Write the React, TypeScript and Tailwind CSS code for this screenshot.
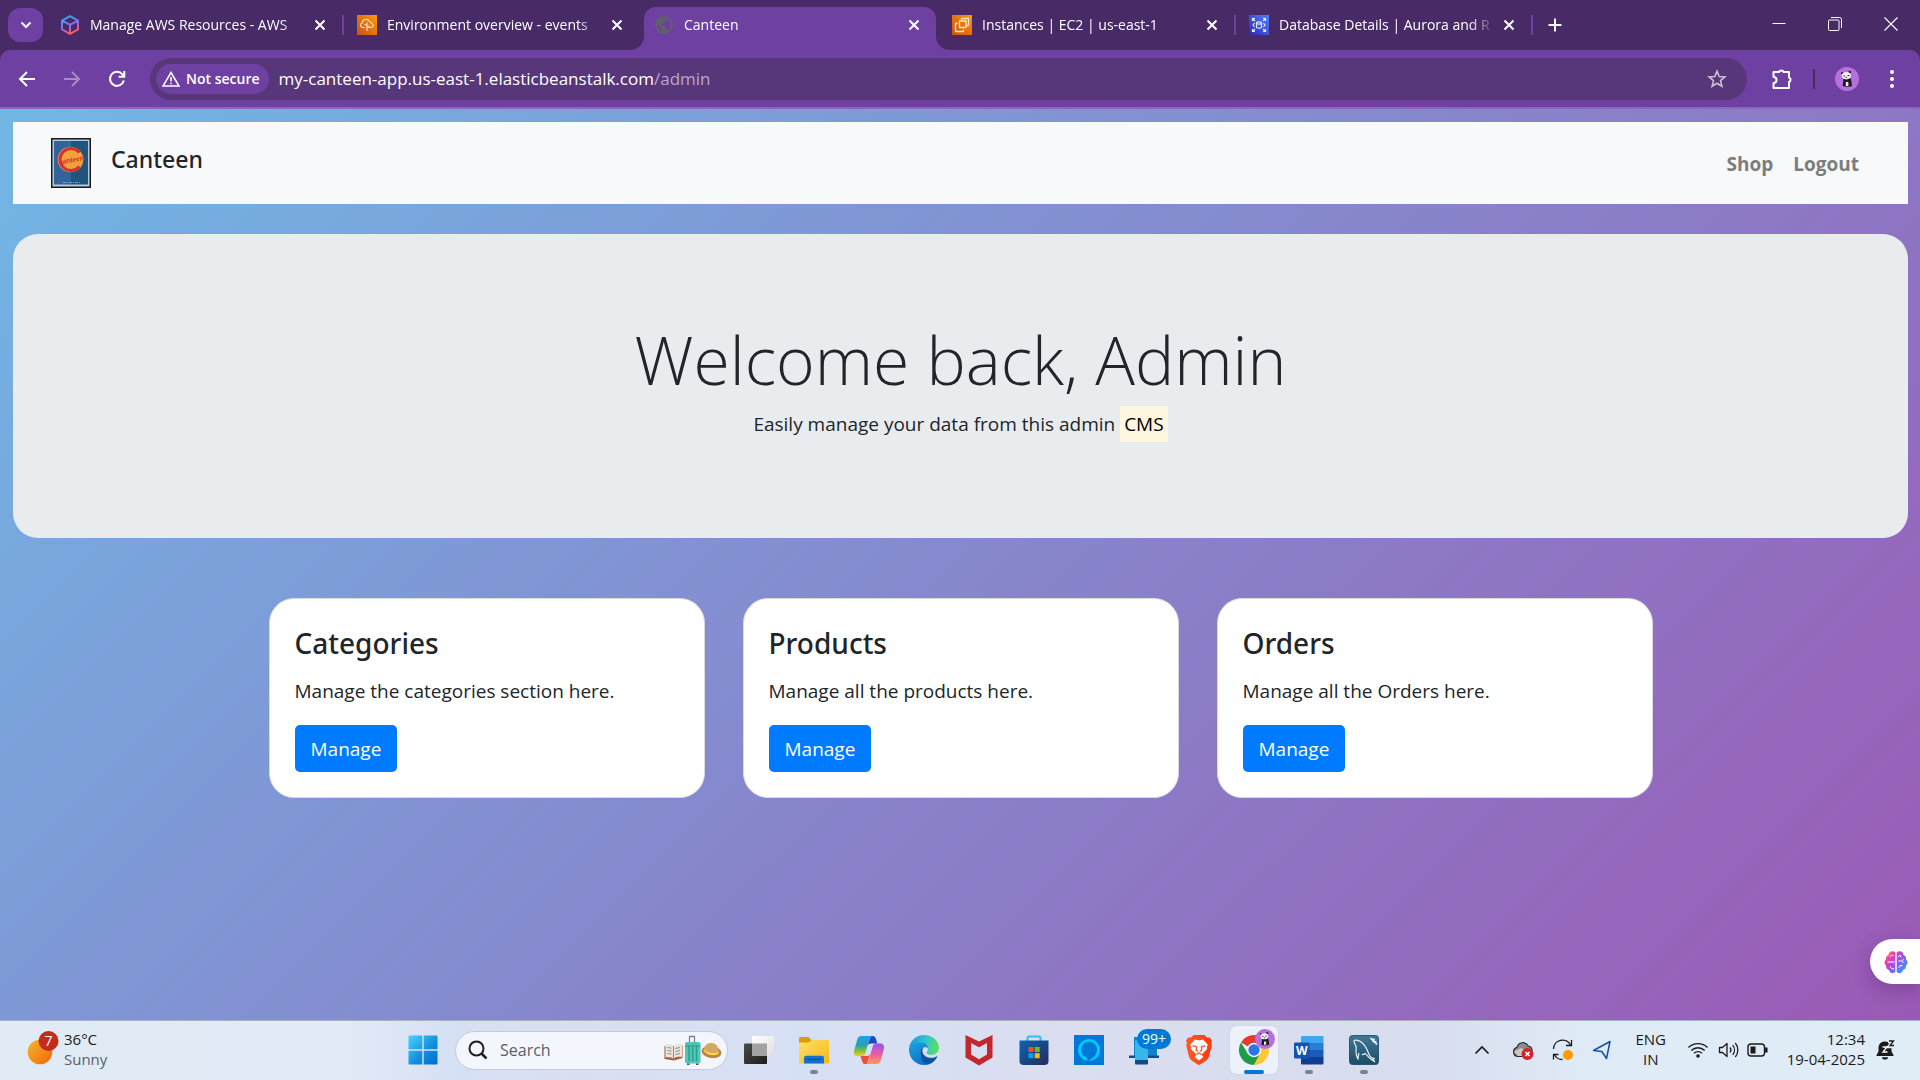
import React from "react";

const UI = "font-['Open_Sans','Noto_Sans',sans-serif]";

type IconProps = { className?: string };

/* ---------- Browser icons ---------- */

function AwsCube() {
  return (
    <svg viewBox="0 0 20 20" className="size-5" fill="none" strokeWidth="2" strokeLinejoin="round" strokeLinecap="round">
      <defs>
        <linearGradient id="cube" x1="6" y1="0" x2="14" y2="20" gradientUnits="userSpaceOnUse">
          <stop offset="0" stopColor="#19b5e6" />
          <stop offset=".5" stopColor="#8a6cf0" />
          <stop offset=".8" stopColor="#f0568c" />
          <stop offset="1" stopColor="#ff6a3d" />
        </linearGradient>
      </defs>
      <path d="M10 1.2 18 5.6v8.8l-8 4.4-8-4.4V5.6zM2 5.6l8 4.2 8-4.2M10 9.8v9" stroke="url(#cube)" />
    </svg>
  );
}

function BeanstalkIcon() {
  return (
    <svg viewBox="0 0 20 20" className="size-5" fill="none">
      <defs>
        <linearGradient id="orange" x1="0" y1="20" x2="20" y2="0" gradientUnits="userSpaceOnUse">
          <stop offset="0" stopColor="#c8511b" />
          <stop offset="1" stopColor="#ff9900" />
        </linearGradient>
      </defs>
      <rect width="20" height="20" fill="url(#orange)" />
      <path d="M7.500 12.500H5.500a2.300 2.300 0 0 1-.3-4.500 3.800 3.800 0 0 1 7.200-1.500 2 2 0 0 1 2 1.700 2.200 2.200 0 0 1 0 4.300h-2M10 15.500V8M10 11l-2-1.500M10 13l2.200-1.800" stroke="#fbe3c8" strokeWidth="1.100" strokeLinecap="round" />
    </svg>
  );
}

function GlobeIcon() {
  return (
    <svg viewBox="0 0 20 20" className="size-5">
      <circle cx="10" cy="10" r="8" fill="none" stroke="#5f6368" strokeWidth="1.700" />
      <path d="M9.500 2.500c-4 0-7 3-7.300 7.100 1.500.9 2.600.9 3.800 1.900 1 .9.300 2.200 1.600 2.900.9.500.6 1.900 1 3.100 2.100.4 4-.2 5.600-1.600-.4-1.300-1-1.600-2.200-1.700-1-1.100.2-2.600-1.300-3.300-1.100-.5-2.600.2-3.300-1 0-1.100 1.300-1.300 2.100-1.700.7-.5.3-1.400 1.200-2 .8-.6 1.300-.6 1.800-1.400-.3-1.100-1.200-1.900-3-2.300z" fill="#5f6368" />
    </svg>
  );
}

function Ec2Icon() {
  return (
    <svg viewBox="0 0 20 20" className="size-5" fill="none">
      <rect width="20" height="20" fill="url(#orange)" />
      <g stroke="#fde7cd" strokeWidth="1.300" strokeLinejoin="round">
        <path d="M7.500 6h6.500v6.500H7.500zM9.500 3.500H16.500V10.500M5.500 8.500H3.500v8h8v-2" />
        <path d="M9.500 5V3.500M14.500 10.500h2" />
      </g>
    </svg>
  );
}

function RdsIcon() {
  return (
    <svg viewBox="0 0 20 20" className="size-5" fill="none">
      <defs>
        <linearGradient id="rds" x1="0" y1="20" x2="20" y2="0" gradientUnits="userSpaceOnUse">
          <stop offset="0" stopColor="#2e27ad" />
          <stop offset="1" stopColor="#527fff" />
        </linearGradient>
      </defs>
      <rect width="20" height="20" fill="url(#rds)" />
      <g stroke="#e4eaff" strokeWidth="1.200">
        <path d="M3.500 6V3.500H6M3.500 3.500 6 6M14 3.500h2.500V6M16.500 3.500 14 6M3.500 14v2.500H6M3.500 16.500 6 14M14 16.500h2.500V14M16.500 16.500 14 14M5.500 8l-1.500 2 1.500 2M14.500 8l1.500 2-1.500 2" />
        <ellipse cx="10" cy="8" rx="2.500" ry="1.100" />
        <path d="M7.500 8v4c0 1.500 5 1.500 5 0V8" />
      </g>
    </svg>
  );
}

function CloseX({ className }: IconProps) {
  return (
    <svg viewBox="0 0 12 12" className={className} fill="none" stroke="#fff" strokeWidth="2">
      <path d="m1.500 1.500 9 9M10.500 1.500l-9 9" />
    </svg>
  );
}

function Panda({ className }: IconProps) {
  return (
    <svg viewBox="0 0 24 24" className={className}>
      <circle cx="12" cy="12" r="12" fill="#b66fe0" />
      <circle cx="7.300" cy="6.300" r="1.300" fill="#222" />
      <circle cx="14.800" cy="5" r="1.300" fill="#222" />
      <path d="M8.500 11.500h7.500l1 7.500c-1.500 1-7 1-9.300 0z" fill="#1b1b1f" />
      <ellipse cx="11.300" cy="8.700" rx="4.700" ry="3.700" fill="#f1f1f1" />
      <path d="M8.500 9h1.800M12.500 8.500h1.800M10.800 10.500h1.200" stroke="#222" strokeWidth="1" />
      <path d="M10.800 15.500c.6-1 2-1 2.600 0V19h-2.600z" fill="#ececec" />
    </svg>
  );
}

/* ---------- Taskbar icons ---------- */

function WindowsLogo() {
  return (
    <svg viewBox="0 0 30 30" className="size-[30px]">
      <defs>
        <linearGradient id="win" x1="0" y1="0" x2="30" y2="30" gradientUnits="userSpaceOnUse">
          <stop offset="0" stopColor="#4fd3ff" />
          <stop offset=".55" stopColor="#1490df" />
          <stop offset="1" stopColor="#0069cf" />
        </linearGradient>
      </defs>
      <path fill="url(#win)" d="M1.500.5H14.300V14.300H.5V1.500a1 1 0 0 1 1-1zM15.700.5H28.500a1 1 0 0 1 1 1V14.300H15.700zM.5 15.700H14.300V29.500H1.500a1 1 0 0 1-1-1zM15.700 15.700H29.500V28.500a1 1 0 0 1-1 1H15.700z" />
    </svg>
  );
}

function TaskViewIcon() {
  return (
    <svg viewBox="0 0 32 32" className="size-8">
      <defs>
        <linearGradient id="tv" x1="0" y1="0" x2="1" y2="1">
          <stop offset="0" stopColor="#4a4a4a" />
          <stop offset="1" stopColor="#1c1c1c" />
        </linearGradient>
        <linearGradient id="tv2" x1="0" y1="0" x2="1" y2="1">
          <stop offset="0" stopColor="#fff" />
          <stop offset="1" stopColor="#dfdfdf" />
        </linearGradient>
      </defs>
      <rect x="1" y="9.500" width="23" height="20.500" rx="1" fill="url(#tv)" />
      <rect x="9" y="2" width="22" height="20" rx="1" fill="url(#tv2)" />
      <path d="M9 9.500h15V22H9z" fill="#a3a3a3" />
    </svg>
  );
}

function ExplorerIcon() {
  return (
    <svg viewBox="0 0 32 32" className="size-8">
      <defs>
        <linearGradient id="fold" x1="0" y1="0" x2="1" y2="1">
          <stop offset="0" stopColor="#ffdf6b" />
          <stop offset="1" stopColor="#f9b716" />
        </linearGradient>
      </defs>
      <path d="M1 4a1 1 0 0 1 1-1h8.500l3 3v4H1z" fill="#dd9b07" />
      <path d="M1 8.500h9.500L13.500 6H30a1 1 0 0 1 1 1v21.500a1 1 0 0 1-1 1H2a1 1 0 0 1-1-1z" fill="url(#fold)" />
      <path d="M6 29.500V24a2.200 2.200 0 0 1 2.200-2.200h15.600A2.200 2.200 0 0 1 26 24v5.500z" fill="#0f72cc" />
      <path d="M9.500 25.500h13" stroke="#0a4b96" strokeWidth="1.300" />
    </svg>
  );
}

function CopilotIcon() {
  return (
    <svg viewBox="0 0 32 32" className="size-8">
      <defs>
        <linearGradient id="cpA" x1="0" y1="0" x2="0" y2="1">
          <stop offset="0" stopColor="#1aa3f0" />
          <stop offset=".45" stopColor="#2b9fb4" />
          <stop offset=".7" stopColor="#6fbf45" />
          <stop offset="1" stopColor="#f3ca1b" />
        </linearGradient>
        <linearGradient id="cpB" x1="0" y1="0" x2="0" y2="1">
          <stop offset="0" stopColor="#9357e8" />
          <stop offset=".5" stopColor="#e65ba8" />
          <stop offset="1" stopColor="#ff9a52" />
        </linearGradient>
      </defs>
      <path d="M18 2h1.500c2 0 2.700 1 3.200 2.600L24.300 9.500h-6c-2.500 0-3.300 1-4 3L17 4z" fill="#1949c4" />
      <path d="M14 30h-1.500c-2 0-2.800-1-3.300-2.600L7.500 22h6.300c2.500 0 3-1 3.800-3.500z" fill="#ef4f3a" />
      <path d="M8.500 2h11c-1.800.5-2.500 1.600-3.100 3.500l-4 13.500c-.7 2.200-1.500 3-3.500 3H4.500C1.600 22 .3 20 1.100 16.900L4 6.300C4.900 3.200 6 2 8.500 2z" fill="url(#cpA)" />
      <path d="M23.500 30h-11c1.800-.5 2.500-1.600 3.100-3.500l4-13.500c.7-2.200 1.500-3.500 3.500-3.500h4.400c2.900 0 4.200 2.500 3.400 5.600L28 25.700c-.9 3.100-2 4.300-4.500 4.300z" fill="url(#cpB)" />
    </svg>
  );
}

function EdgeIcon() {
  return (
    <svg viewBox="0 0 32 32" className="size-8">
      <defs>
        <linearGradient id="edA" x1="2" y1="10" x2="31" y2="14" gradientUnits="userSpaceOnUse">
          <stop offset="0" stopColor="#1d9ad8" />
          <stop offset=".5" stopColor="#2fc3d0" />
          <stop offset="1" stopColor="#62e256" />
        </linearGradient>
        <linearGradient id="edB" x1="4" y1="10" x2="16" y2="31" gradientUnits="userSpaceOnUse">
          <stop offset="0" stopColor="#1b9de2" />
          <stop offset="1" stopColor="#0b6fc9" />
        </linearGradient>
      </defs>
      <path d="M1 14.500C1.800 7 8 1 16 1c8.500 0 15 6 15 12.500 0 4.500-3.500 7.500-7.500 7.500-3.300 0-5-1.200-5-2.300 0-.8 1.300-1.200 1.300-3.200 0-3-3-5.500-7.300-5.500C7 10 2.500 12 1 14.500z" fill="url(#edA)" />
      <path d="M1 14.500C3 11 7.500 8.500 12.500 8.500c4 0 7 2 7.300 5.500-4-2-8 1-7.600 6 .3 5.500 4.500 10 8.800 10.200-1.500.6-3.200.8-5 .8C7.500 31 1 24 1 16z" fill="url(#edB)" />
      <path d="M12.200 20c-.3-3 .9-5.700 3.300-6.700-.8 1-1.100 2.200-1.100 3.400 0 4.300 4 7 8.600 7 2.500 0 4.300-.7 5.500-1.300.6-.3 1 .1.700.7-1.700 3.600-5 6.600-9.200 7.400-4.500-.5-7.500-5-7.800-10.500z" fill="#0c559f" />
    </svg>
  );
}

function McAfeeIcon() {
  return (
    <svg viewBox="0 0 32 32" className="size-8">
      <path d="M2.500 1 16 7.500 29.500 1v22.500L16 31.500 2.500 23.500zM8 9v11.500l8 4.700 8-4.700V9l-8 4.200z" fill="#c1272d" fillRule="evenodd" />
    </svg>
  );
}

function StoreIcon() {
  return (
    <svg viewBox="0 0 32 32" className="size-8">
      <defs>
        <linearGradient id="st" x1="0" y1="0" x2="1" y2="1">
          <stop offset="0" stopColor="#0a63b5" />
          <stop offset="1" stopColor="#252d5c" />
        </linearGradient>
      </defs>
      <path d="M9.500 8V4a1.500 1.500 0 0 1 1.500-1.500h10A1.500 1.500 0 0 1 22.500 4v4" fill="none" stroke="#2cc0f5" strokeWidth="2" />
      <path d="M1.500 6.500h29V27a4 4 0 0 1-4 4h-21a4 4 0 0 1-4-4z" fill="url(#st)" />
      <path d="M10.500 13h5v5h-5z" fill="#f25022" />
      <path d="M16.700 13h5v5h-5z" fill="#7fba00" />
      <path d="M10.500 19.200h5v5h-5z" fill="#00a4ef" />
      <path d="M16.700 19.200h5v5h-5z" fill="#ffb900" />
    </svg>
  );
}

function AlexaIcon() {
  return (
    <svg viewBox="0 0 32 32" className="size-8">
      <path d="M1 1h30v30H1z" fill="#0078d7" />
      <path d="M16 5a11 11 0 0 0-3 21.600c1.500.4 1.300.5 1.300-1.100 0-1.200 0-1.700-1-2.200A8 8 0 1 1 24 15.500c0 6-5 9.500-9 11.500C22 27 27 22.500 27 16A11 11 0 0 0 16 5z" fill="#00caff" />
    </svg>
  );
}

function PhoneLinkIcon() {
  return (
    <svg viewBox="0 0 32 32" className="size-8">
      <path d="M6 3h23v19H6z" fill="#1483cf" />
      <path d="M1 21.500h30V24H1z" fill="#0c4f8c" />
      <path d="M7 6.500h13v21H7z" fill="#38b6ea" />
      <path d="M7 26h13v3.500a1 1 0 0 1-1 1H8a1 1 0 0 1-1-1z" fill="#0e4c86" />
    </svg>
  );
}

function BraveIcon() {
  return (
    <svg viewBox="0 0 32 32" className="size-8">
      <defs>
        <linearGradient id="br" x1="0" x2="1">
          <stop offset="0" stopColor="#ff5a24" />
          <stop offset="1" stopColor="#fb3a10" />
        </linearGradient>
      </defs>
      <path d="m10.500 1 11 0 2.500 2.600 2.800-.2 2.200 3.400-.9 2.700.7 2L26 22.500c-.6 2-1.500 3-3 4.200L16 31.200l-7-4.500c-1.500-1.200-2.400-2.200-3-4.200L3.200 11.500l.7-2L3 6.800l2.200-3.400 2.800.2z" fill="url(#br)" />
      <path d="M12 5.500c1.300.5 2.600.8 4 .8s2.700-.3 4-.8l4.800 5.200-1 2.500.4 1.600-5.200 5.400.2 1.600 1.200 1.200-4.400 3.600-4.400-3.600 1.200-1.200.2-1.600-5.200-5.400.4-1.600-1-2.500z" fill="#fff" />
      <path d="M9.500 11.800l4 .8M22.500 11.800l-4 .8M13.800 12.500l-.6 3.500 1.800 1.500M18.200 12.500l.6 3.500-1.800 1.500M13.300 20.500 16 19l2.700 1.500" stroke="#fb4a1c" strokeWidth="1.200" fill="none" />
    </svg>
  );
}

function ChromeIcon() {
  return (
    <svg viewBox="0 0 32 32" className="size-8">
      <path d="M16 16 3 8.500A15 15 0 0 1 29 8.500z" fill="#e33b2e" />
      <path d="M16 16 29 8.500A15 15 0 0 1 16 31l6-11z" fill="#fcc934" />
      <path d="M16 16l6 3.500L16 31A15 15 0 0 1 3 8.500L9.800 19.500z" fill="#1e9c4a" />
      <path d="M16 9h13.300l-.3-.5H16z" fill="#e33b2e" />
      <circle cx="16" cy="16" r="7.200" fill="#fff" />
      <circle cx="16" cy="16" r="5.700" fill="#2f74ea" />
    </svg>
  );
}

function WordIcon() {
  return (
    <svg viewBox="0 0 32 32" className="size-8">
      <path d="M8 3a1 1 0 0 1 1-1h20.500a1 1 0 0 1 1 1v6H8z" fill="#41a5ee" />
      <path d="M8 9h22.500v7H8z" fill="#2b7cd3" />
      <path d="M8 16h22.500v7H8z" fill="#185abd" />
      <path d="M8 23h22.500v6.500a1 1 0 0 1-1 1H9a1 1 0 0 1-1-1z" fill="#103f91" />
      <rect x="1" y="8.500" width="15.500" height="16" rx="1.300" fill="#1453b3" />
      <text x="8.800" y="20.700" textAnchor="middle" fontSize="12" fontWeight="700" fill="#fff" fontFamily="Open Sans, sans-serif">W</text>
    </svg>
  );
}

function WorkbenchIcon() {
  return (
    <svg viewBox="0 0 32 32" className="size-8">
      <defs>
        <linearGradient id="wb" x1="0" y1="0" x2="0" y2="1">
          <stop offset="0" stopColor="#3f7896" />
          <stop offset="1" stopColor="#1c4c66" />
        </linearGradient>
      </defs>
      <rect x="1.500" y="1.500" width="29" height="29" rx="3" fill="url(#wb)" stroke="#2b5870" />
      <path d="M6 6.500c5-1.500 10 3 12.500 8 1.500 3.500 2.500 6.500 4 8.500l3.500 1.500-1 .5 2 3c-2.500-2.500-5-3-6.500-5-1.500-1.500-2-3-3.500-3.500-1 1-2.500 1.500-3 .5M6 6.500c-.5 2 1.500 4 2 6s-.5 5 .5 8.500c.5 2 1 3.500 1.500 4 .3-2 .5-4.500 1-6" fill="none" stroke="#e8f1f5" strokeWidth="1.200" />
      <path d="M22.500 4 25 6.500M25 6.500l4 4M26 4.500l-.5 3 3 .5" stroke="#fff" strokeWidth="1.600" fill="none" />
    </svg>
  );
}

function SearchScene() {
  return (
    <svg viewBox="0 0 58 32" className="h-8 w-[58px] shrink-0">
      <path d="M.5 12 9 13.500l9.500-2V24L10 26.500.5 25z" fill="#a65b3b" />
      <path d="M1.500 10.500c3-1 6-.5 8 1.500 2-2 5-3 8.500-2v13c-3.500-.5-6.500 0-8.500 1.800-2-1.400-5-1.800-8-1.300z" fill="#e9e4dc" />
      <path d="M9.500 12v12.500M3.500 13.500l4 .7M3.500 16.500l4 .7M3.500 19.500l4 .7M11.500 14.500l4.500-1M11.500 17.500l4.500-1M11.500 20.500l4.500-1" stroke="#8f8b86" strokeWidth="1" fill="none" />
      <path d="M25.500 8V2.500h5V8" fill="none" stroke="#7c8190" strokeWidth="1.300" />
      <rect x="21" y="8" width="15.500" height="21.500" rx="2" fill="#4fc7b5" />
      <path d="M21 12h15.500" stroke="#2f9c90" strokeWidth="1" />
      <path d="M25 11v16M28.700 11v16M32.500 11v16" stroke="#2c9a8d" strokeWidth="1.300" />
      <path d="M23 29.500h2.500v1.500H23zM32 29.500h2.500v1.500H32z" fill="#4a4f58" />
      <ellipse cx="47.500" cy="18" rx="10" ry="6" fill="#b98744" transform="rotate(8 47.500 18)" />
      <path d="M40 16c0-5 4-7.500 8-7 4.500.5 7 4.500 6.500 8.500-4 3.500-11 2.500-14.500-1.500z" fill="#d5a763" />
      <path d="M39.800 15c3 4 10.500 5.500 15 2.500l-.5 2.500c-5 2.500-12 1-14.500-3z" fill="#ffd84a" />
    </svg>
  );
}

/* ---------- Data ---------- */

const tabs = [
  { title: "Manage AWS Resources - AWS", icon: <AwsCube />, divider: true },
  { title: "Environment overview - events", icon: <BeanstalkIcon />, divider: false },
  { title: "Canteen", icon: <GlobeIcon />, divider: false, active: true },
  { title: "Instances | EC2 | us-east-1", icon: <Ec2Icon />, divider: true },
  { title: "Database Details | Aurora and R", icon: <RdsIcon />, divider: true },
];

const cards = [
  { title: "Categories", text: "Manage the categories section here." },
  { title: "Products", text: "Manage all the products here." },
  { title: "Orders", text: "Manage all the Orders here." },
];

type TaskbarApp = { name: string; icon: React.ReactNode; state?: "open" | "active"; badge?: string };

const apps: TaskbarApp[] = [
  { name: "Task view", icon: <TaskViewIcon /> },
  { name: "File Explorer", icon: <ExplorerIcon />, state: "open" },
  { name: "Copilot", icon: <CopilotIcon /> },
  { name: "Edge", icon: <EdgeIcon /> },
  { name: "McAfee", icon: <McAfeeIcon /> },
  { name: "Microsoft Store", icon: <StoreIcon /> },
  { name: "Alexa", icon: <AlexaIcon /> },
  { name: "Phone Link", icon: <PhoneLinkIcon />, badge: "99+" },
  { name: "Brave", icon: <BraveIcon /> },
  { name: "Chrome", icon: <ChromeIcon />, state: "active" },
  { name: "Word", icon: <WordIcon />, state: "open" },
  { name: "MySQL Workbench", icon: <WorkbenchIcon />, state: "open" },
];

/* ---------- Browser chrome ---------- */

function TabStrip() {
  return (
    <div className="flex h-[50px] items-end bg-[#472a66] text-white">
      <button aria-label="Search tabs" className="mr-1 mb-2 ml-2 flex h-[34px] w-[35px] shrink-0 items-center justify-center rounded-xl bg-[#6e40a2]">
        <svg viewBox="0 0 12 12" className="size-3" fill="none" stroke="#fff" strokeWidth="2">
          <path d="m1.500 3.500 4.500 4.500 4.500-4.500" />
        </svg>
      </button>
      <div role="tablist" className="flex min-w-0 flex-1">
        {tabs.map((t) => (
          <div
            key={t.title}
            className={
              t.active
                ? "relative mx-[3px] flex h-[43px] max-w-[292px] min-w-0 flex-1 items-center rounded-t-xl bg-[#6e40a2] pb-[7px] pl-[10px]"
                : "flex h-[43px] max-w-[297px] min-w-0 flex-1 items-center pb-[7px] pl-[13px]"
            }
          >
            {t.active && (
              <>
                <svg viewBox="0 0 14 14" className="absolute bottom-0 -left-[14px] size-[14px]" fill="#6e40a2">
                  <path d="M14 0v14H0A14 14 0 0 0 14 0z" />
                </svg>
                <svg viewBox="0 0 14 14" className="absolute -right-[14px] bottom-0 size-[14px]" fill="#6e40a2">
                  <path d="M0 0v14h14A14 14 0 0 1 0 0z" />
                </svg>
              </>
            )}
            <button role="tab" aria-selected={!!t.active} className="flex min-w-0 flex-1 items-center gap-[10px] text-left">
              <span className="shrink-0">{t.icon}</span>
              <span className="min-w-0 flex-1 overflow-hidden mask-r-from-88% text-sm leading-5 whitespace-nowrap">{t.title}</span>
            </button>
            <button aria-label={`Close ${t.title}`} className="ml-2 shrink-0">
              <CloseX className="size-3" />
            </button>
            <span className={t.divider ? "ml-4 h-5 w-[2px] bg-[#6e40a2]" : t.active ? "ml-[14px] w-[2px]" : "ml-4 w-[2px]"} />
          </div>
        ))}
        <button aria-label="New tab" className="flex h-[43px] w-11 shrink-0 items-center justify-center pb-[7px]">
          <svg viewBox="0 0 14 14" className="size-[14px]" stroke="#fff" strokeWidth="2">
            <path d="M7 .5v13M.5 7h13" />
          </svg>
        </button>
      </div>
      <div className="mb-[19px] flex shrink-0 gap-[42px] pr-[22px]">
        <button aria-label="Minimize">
          <svg viewBox="0 0 14 14" className="size-[14px]" stroke="#fff" strokeWidth="1">
            <path d="M.5 6.500h13" />
          </svg>
        </button>
        <button aria-label="Restore">
          <svg viewBox="0 0 14 14" className="size-[14px]" fill="none" stroke="#fff" strokeWidth="1">
            <rect x=".5" y="3" width="10.500" height="10.500" rx="1" />
            <path d="M3 .5h8.500a2 2 0 0 1 2 2V11" />
          </svg>
        </button>
        <button aria-label="Close window">
          <svg viewBox="0 0 14 14" className="size-[14px]" fill="none" stroke="#fff" strokeWidth="1.200">
            <path d="m.5.5 13 13M13.500.5l-13 13" />
          </svg>
        </button>
      </div>
    </div>
  );
}

function Toolbar() {
  return (
    <div className="bg-[#472a66]">
      <div className="flex h-[59px] items-center rounded-t-[10px] border-b-2 border-[#8c66b8] bg-[#6e40a2] pl-[18px] text-white">
        <button aria-label="Back">
          <svg viewBox="0 0 18 18" className="size-[18px]" fill="none" stroke="#fff" strokeWidth="2">
            <path d="M17 9H2.500M9 2 2 9l7 7" />
          </svg>
        </button>
        <button aria-label="Forward" className="ml-[27px]">
          <svg viewBox="0 0 18 18" className="size-[18px]" fill="none" stroke="#a68bc6" strokeWidth="2">
            <path d="M1 9h14.500M9 2l7 7-7 7" />
          </svg>
        </button>
        <button aria-label="Reload" className="ml-[27px]">
          <svg viewBox="0 0 18 18" className="size-[18px]" fill="none" stroke="#fff" strokeWidth="2">
            <path d="M15.800 10.500A7 7 0 1 1 14.500 4.500l1.300 1.500M16.300 1v5.700h-5.700" />
          </svg>
        </button>
        <div className="ml-6 flex h-[42px] min-w-0 flex-1 items-center rounded-full bg-[#573779] pr-5 pl-[6px]">
          <button className="flex h-[30px] shrink-0 items-center gap-[6px] rounded-full bg-[#6e40a2] pr-[9px] pl-[6px] text-sm font-semibold">
            <svg viewBox="0 0 18 16" className="h-4 w-[18px]" fill="none" stroke="#fff" strokeWidth="1.500">
              <path d="M9 1.500 17 15H1zM9 6v4.500M9 11.700v1.500" />
            </svg>
            Not secure
          </button>
          <input
            aria-label="Address"
            defaultValue="my-canteen-app.us-east-1.elasticbeanstalk.com"
            className="ml-[10px] field-sizing-content bg-transparent text-[17px] leading-6 text-white outline-none"
          />
          <span className="text-[17px] leading-6 text-[#b9a6ce]">/admin</span>
          <button aria-label="Bookmark this page" className="ml-auto">
            <svg viewBox="0 0 20 20" className="size-5" fill="none" stroke="#c9c2cf" strokeWidth="1.600">
              <path d="m10 2.200 2.200 5.300 5.700.4-4.400 3.700 1.400 5.600L10 14.200l-4.900 3 1.400-5.600L2.100 7.900l5.700-.4z" />
            </svg>
          </button>
        </div>
        <button aria-label="Extensions" className="ml-6">
          <svg viewBox="0 0 22 22" className="size-[22px]" fill="none" stroke="#fff" strokeWidth="2" strokeLinejoin="round">
            <path d="M2.500 4H8a2.500 2.500 0 0 1 4.600 0H18v5.500a2.300 2.300 0 0 1 0 4.400V20H2.500v-5a3 3 0 0 0 0-6z" />
          </svg>
        </button>
        <span className="ml-5 h-5 w-[2px] bg-[#472a66]" />
        <button aria-label="Profile" className="ml-5">
          <Panda className="size-6" />
        </button>
        <button aria-label="Menu" className="mr-[19px] ml-6">
          <svg viewBox="0 0 18 18" className="size-[18px]" fill="#fff">
            <circle cx="9" cy="2" r="2" />
            <circle cx="9" cy="9" r="2" />
            <circle cx="9" cy="16" r="2" />
          </svg>
        </button>
      </div>
    </div>
  );
}

/* ---------- Web page ---------- */

function CanteenLogo() {
  return (
    <svg viewBox="0 0 40 50" className="h-[50px] w-10 shrink-0" role="img" aria-label="Canteen logo">
      <path d="M0 0h40v50H0z" fill="#17191c" />
      <path d="M1.500 1.500h37v47h-37z" fill="#b9c8d6" />
      <path d="M3 3h17v43.500H3z" fill="#33639a" />
      <path d="M20 3h17v43.500H20z" fill="#20547d" />
      <circle cx="19.500" cy="21.500" r="12.800" fill="#f1a03c" />
      <path d="M28.500 14.500A11 11 0 1 0 28.500 28.500" fill="none" stroke="#d32f35" strokeWidth="3" />
      <text x="22" y="24" textAnchor="middle" fontSize="8" fontWeight="700" fontStyle="italic" fill="#d32f35" fontFamily="Liberation Serif, serif" transform="rotate(-10 22 22)">anteen</text>
      <path d="M12 44.500h17" stroke="#7fa0bd" strokeWidth="1" strokeDasharray="3 1 1 1" />
    </svg>
  );
}

function Page() {
  return (
    <main className="relative flex-1 bg-[linear-gradient(135deg,#71b7e6,#9b59b6)] py-[13px] pr-3 pl-[13px] text-[#212529]">
      <header className="flex h-[82px] items-center bg-[#f8f9fa] pr-[49px] pl-[38px]">
        <CanteenLogo />
        <h5 className="mb-2 ml-5 font-['Noto_Sans',sans-serif] text-[23px] leading-[30px] font-medium">Canteen</h5>
        <nav className="ml-auto flex gap-5 pt-[2px] text-[19px] leading-[30px] font-bold text-[#7c7d7d]">
          <a href="#shop">Shop</a>
          <a href="#logout">Logout</a>
        </nav>
      </header>

      <section className="mt-[30px] rounded-[25px] bg-[#e9ecef] px-10 pt-[83px] pb-[79px] text-center">
        <h1 className="mb-2 text-[66px] leading-[84px] font-light">Welcome back, Admin</h1>
        <p className="mb-5 text-[19px] leading-[30px]">
          Easily manage your data from this admin{" "}
          <mark className="bg-[#fff6e0] px-1 py-[5px] text-black">CMS</mark>
        </p>
      </section>

      <section className="mx-auto mt-[60px] grid max-w-[1384px] grid-cols-3 gap-[38px]">
        {cards.map((c) => (
          <article key={c.title} className="rounded-[25px] border border-[#d9dade] bg-white px-[25px] pt-[26px] pb-[25px]">
            <h4 className="mb-[15px] font-['Noto_Sans',sans-serif] text-[28px] leading-9 font-medium">{c.title}</h4>
            <p className="mb-[19px] text-[19px] leading-[30px]">{c.text}</p>
            <a href="#manage" className="inline-block rounded-[5px] bg-[#007bff] px-4 pt-[9px] pb-[7px] align-top text-[19px] leading-[31px] text-white">
              Manage
            </a>
          </article>
        ))}
      </section>

      <button aria-label="Assistant" className="absolute right-0 bottom-9 flex h-[45px] w-[50px] items-center rounded-l-full bg-white pl-[14px] shadow-[0_6px_18px_rgba(60,20,90,0.3)]">
        <svg viewBox="0 0 24 24" className="size-6">
          <defs>
            <linearGradient id="brain" x1="2" y1="3" x2="22" y2="21" gradientUnits="userSpaceOnUse">
              <stop offset="0" stopColor="#ff9a3c" />
              <stop offset=".2" stopColor="#f73aa8" />
              <stop offset=".55" stopColor="#9353f0" />
              <stop offset="1" stopColor="#1fa6ff" />
            </linearGradient>
          </defs>
          <path d="M11.300 2.500C8.500-.3 4.500 1.500 4.500 5 2 6 1.500 8 2 9.500c-2 1.500-2 4.500 0 6-.2 2.500 1 4 3 4.500 1 3.500 4.500 4 6.300 2zM12.700 2.500c2.800-2.800 6.800-1 6.800 2.500 2.500 1 3 3 2.500 4.500 2 1.500 2 4.500 0 6 .2 2.500-1 4-3 4.500-1 3.500-4.500 4-6.300 2z" fill="url(#brain)" />
          <path d="M3.500 12h7M6 7c.5-1.500 2-2 3.500-1.500M6.500 16.500c0 2 1.500 2.500 3.500 2.300M14 7l2-2 1 2.500M14.500 11h3l2 2M18 10.500l2-1M14.500 18l2.500-2.500M15.500 15.500h3" stroke="#fff" fill="none" strokeWidth="1" />
        </svg>
      </button>
    </main>
  );
}

/* ---------- Taskbar ---------- */

function Taskbar() {
  return (
    <footer className="flex h-[60px] items-center border-t border-[#aab0c4] bg-[linear-gradient(90deg,#e1ebf5_0%,#e0eaf6_18%,#d6e0f5_24%,#dadff0_30%,#d6e0f5_42%,#dadef0_54%,#d8ddee_74%,#deeaf5_82%,#e0ecf6_100%)] pb-px text-[#1b1b1b]">
      <button className="flex w-[395px] shrink-0 items-center pb-[3px] pl-[26px] text-left text-[15px] leading-5">
        <svg viewBox="0 0 34 36" className="h-9 w-[34px]" role="img" aria-label="7 alerts">
          <defs>
            <linearGradient id="sun" x1="0" y1="0" x2="1" y2="1">
              <stop offset="0" stopColor="#f2b92c" />
              <stop offset="1" stopColor="#f4650a" />
            </linearGradient>
          </defs>
          <circle cx="14" cy="21" r="12.300" fill="url(#sun)" />
          <circle cx="22.500" cy="10" r="10" fill="#c42b1c" />
          <text x="22.500" y="15" textAnchor="middle" fontSize="14" fill="#fff" fontFamily="Open Sans, sans-serif">7</text>
        </svg>
        <span className="ml-1">
          36°C
          <br />
          <span className="text-[#5b6066]">Sunny</span>
        </span>
      </button>
      <button aria-label="Start" className="flex w-[55px] shrink-0 justify-center">
        <WindowsLogo />
      </button>
      <label className="ml-[5px] flex h-[39px] w-[273px] shrink-0 items-center rounded-full border border-[#c3cadb] bg-[#f3f6fd] pr-[5px] pl-[12px]">
        <svg viewBox="0 0 20 20" className="size-5 shrink-0" fill="none" stroke="#1f1f1f" strokeWidth="2">
          <circle cx="8.500" cy="8.500" r="7" />
          <path d="m13.500 13.500 5 5" strokeWidth="2.500" />
        </svg>
        <input aria-label="Search" placeholder="Search" className="ml-3 min-w-0 flex-1 bg-transparent text-base outline-none placeholder:text-[#5b5e66]" />
        <SearchScene />
      </label>
      <div className="ml-[7px] flex shrink-0 gap-[7px]">
        {apps.map((a) => (
          <button
            key={a.name}
            aria-label={a.name}
            className={
              a.state === "active"
                ? "relative flex size-12 items-center justify-center rounded-md bg-[#edf1fa] shadow-[0_0_1px_rgba(0,0,0,0.25)]"
                : "relative flex size-12 items-center justify-center"
            }
          >
            {a.icon}
            {a.badge && (
              <span className="absolute top-[3px] -right-[3px] flex h-5 w-[34px] items-center justify-center rounded-full bg-[#0078d4] text-sm leading-5 text-white">{a.badge}</span>
            )}
            {a.state === "active" && <Panda className="absolute top-[3px] right-[3px] size-5" />}
            {a.state === "open" && <span className="absolute bottom-0 h-1 w-2 rounded-full bg-[#7d838e]" />}
            {a.state === "active" && <span className="absolute bottom-0 h-1 w-5 rounded-full bg-[#0078d4]" />}
          </button>
        ))}
      </div>
      <div className="ml-auto flex shrink-0 items-center pr-[25px] text-[15px] leading-5">
        <svg viewBox="0 0 20 20" className="size-5" fill="none" stroke="#1b1b1b" strokeWidth="1.700">
          <path d="m3.500 13.500 6.500-6.500 6.500 6.500" />
        </svg>
        <svg viewBox="0 0 22 20" className="ml-5 h-5 w-[22px]">
          <path d="M6 16.500a4.700 4.700 0 0 1-1-9.200A6 6 0 0 1 16.200 6a4.500 4.500 0 0 1 1.300 8.500V16.500z" fill="#8b8b8b" stroke="#2c2c2c" strokeWidth="1.200" />
          <path d="M2 11.500 9 8l9 4.500L14 16H6z" fill="#c9c9c9" />
          <circle cx="15.500" cy="14" r="6" fill="#d9212c" />
          <path d="m13.500 12 4 4M17.500 12l-4 4" stroke="#fff" strokeWidth="1.600" />
        </svg>
        <svg viewBox="0 0 22 22" className="ml-[18px] size-[22px]" fill="none" stroke="#1b1b1b" strokeWidth="1.300">
          <path d="M1.500 10a9 9 0 0 1 17-4M19.500 1v5.500H14M1.500 20.500V15.500h5M2.500 16a9 9 0 0 0 8 4.500" />
          <circle cx="16" cy="16" r="5" fill="#ff9a00" stroke="none" />
        </svg>
        <svg viewBox="0 0 20 20" className="ml-[18px] size-5" fill="none" stroke="#1250a8" strokeWidth="1.500" strokeLinejoin="round">
          <path d="M18 1.500 1.500 10.500l8.300 1L14.500 18.500z" />
        </svg>
        <button className="ml-[21px] w-9 pb-[3px] text-center">
          ENG
          <br />
          IN
        </button>
        <svg viewBox="0 0 22 18" className="ml-[18px] h-[18px] w-[22px]" fill="none" stroke="#1b1b1b" strokeWidth="1.400">
          <path d="M1.500 6.500a13.500 13.500 0 0 1 19 0M4.300 9.500a9.500 9.500 0 0 1 13.400 0M7 12.300a5.600 5.600 0 0 1 8 0" />
          <circle cx="11" cy="15" r="1.800" fill="#1b1b1b" stroke="none" />
        </svg>
        <svg viewBox="0 0 22 18" className="ml-[9px] h-[18px] w-[22px]" fill="none" stroke="#1b1b1b" strokeWidth="1.300" strokeLinejoin="round">
          <path d="M1.500 6.500h3L9 2.500v13l-4.500-4h-3z" />
          <path d="M12 6.500a4 4 0 0 1 0 5M14.700 4.200a7.500 7.500 0 0 1 0 9.600M17.300 2a11 11 0 0 1 0 14" />
        </svg>
        <svg viewBox="0 0 22 14" className="ml-[7px] h-[14px] w-[22px]" fill="none" stroke="#1b1b1b" strokeWidth="1.400">
          <rect x="1" y="1" width="16.500" height="12" rx="3" />
          <path d="M3.500 3.500h5v7h-5z" fill="#1b1b1b" stroke="none" />
          <path d="M19.300 4.500v5" strokeWidth="2.500" />
        </svg>
        <button className="ml-[18px] pb-[3px] text-right">
          12:34
          <br />
          19-04-2025
        </button>
        <svg viewBox="0 0 20 20" className="ml-[10px] size-5">
          <path d="M10 1.500c-4 0-6.500 2.700-6.500 6.500v3.500L1.500 15v1h17v-1l-2-3.500V8A6 6 0 0 0 10 1.500zM7 17.200a3 2.300 0 0 0 6 0z" fill="#1b1b1b" />
          <path d="M13 1.500h5l-4 5h5" stroke="#e0ecf6" strokeWidth="3.500" fill="none" />
          <path d="M14 1h4.500l-3.500 4.500h4" stroke="#1b1b1b" strokeWidth="1.300" fill="none" />
          <path d="M7.500 7h4.500l-4 5h4.500" stroke="#fff" strokeWidth="1.300" fill="none" />
        </svg>
      </div>
    </footer>
  );
}

export default function App() {
  return (
    <div className={`${UI} flex min-h-screen flex-col`}>
      <TabStrip />
      <Toolbar />
      <Page />
      <Taskbar />
    </div>
  );
}
